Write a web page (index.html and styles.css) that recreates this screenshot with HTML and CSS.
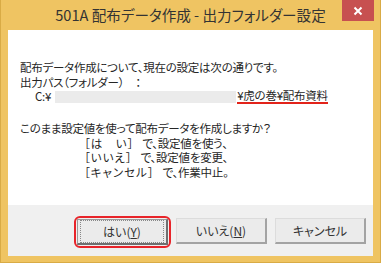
FILE: index.html
```html
<!DOCTYPE html>
<html lang="ja">

<head>
  <meta charset="UTF-8">
  <meta name="viewport" content="width=device-width, initial-scale=1.0">
  <title>501A 配布データ作成 - 出力フォルダー設定</title>
  <link rel="stylesheet" href="styles.css">
</head>

<body>
  <div class="window">
    <div class="titlebar">
      <span></span>
      <span class="title">501A 配布データ作成 - 出力フォルダー設定</span>
      <button class="close" aria-label="閉じる">
        <svg width="10" height="10" viewBox="0 0 10 10">
          <path d="M1.5 1.5 L8.5 8.5 M8.5 1.5 L1.5 8.5" stroke="#fff" stroke-width="2" />
        </svg>
      </button>
    </div>

    <div class="client">
      <div class="message">
        <p class="info">
          配布データ作成について、現在の設定は次の通りです。<br>
          出力パス（フォルダー）　：<br>
          <span class="path">C:¥<span class="masked"></span><span class="marked">¥虎の巻¥配布資料</span></span>
        </p>
        <p class="question">このまま設定値を使って配布データを作成しますか？</p>
        <ul class="choices">
          <li><span class="key">［は　い］</span>で、設定値を使う、</li>
          <li><span class="key">［いいえ］</span>で、設定値を変更、</li>
          <li><span class="key">［キャンセル］</span>で、作業中止。</li>
        </ul>
      </div>

      <div class="actions">
        <span class="highlight">
          <button class="btn default"><span class="focus">はい(<u>Y</u>)</span></button>
        </span>
        <button class="btn">いいえ(<u>N</u>)</button>
        <button class="btn">キャンセル</button>
      </div>
    </div>
  </div>
</body>

</html>
```

FILE: styles.css
```css
body {
  margin: 0;
  font-family: "Noto Sans CJK JP", sans-serif;
  font-feature-settings: "palt";
  background: #efc462;
}

.window {
  width: 381px;
  height: 263px;
  box-sizing: border-box;
  display: flex;
  flex-direction: column;
  background: #efc462;
  border: 1px solid #d9ab45;
  border-top: none;
}

.titlebar {
  height: 30px;
  display: grid;
  grid-template-columns: 1fr auto 1fr;
  align-items: start;
}

.title {
  padding-top: 5px;
  font-size: 14.6px;
  line-height: 20px;
  color: #333;
  white-space: nowrap;
}

.close {
  justify-self: end;
  width: 32px;
  height: 21px;
  margin-right: 6px;
  padding: 0;
  border: none;
  background: #c75050;
  display: flex;
  align-items: center;
  justify-content: center;
}

.client {
  flex: 1;
  margin: 0 7px 6px;
  display: flex;
  flex-direction: column;
}

.message {
  height: 175px;
  box-sizing: border-box;
  background: #fff;
  padding: 30px 0 0 12px;
  font-size: 11.5px;
  line-height: 14.5px;
  letter-spacing: -0.25px;
  color: #262626;
}

.message p {
  margin: 0;
}

.path {
  display: inline-flex;
  align-items: center;
  margin-left: 15px;
}

.masked {
  display: inline-block;
  width: 181px;
  height: 12px;
  margin: 0 1px 0 4px;
  background: #ebebeb;
}

.marked {
  border-bottom: 2px solid #e2231a;
  line-height: 13px;
}

.question {
  margin-top: 17px !important;
}

.choices {
  list-style: none;
  margin: 0;
  padding-left: 64px;
}

.key {
  letter-spacing: 1px;
  margin-right: 8px;
}

.actions {
  flex: 1;
  background: #f0f0f0;
  display: flex;
  justify-content: flex-end;
  align-items: flex-start;
  gap: 8px;
  padding: 13px 7px 0 0;
}

.highlight {
  display: flex;
  padding: 1px;
  margin: -2px -3px 0;
  border: 2px solid #e8242a;
  border-radius: 6px;
}

.btn {
  width: 91px;
  height: 26px;
  padding: 0;
  font-family: inherit;
  font-feature-settings: "palt";
  font-size: 12px;
  color: #333;
  background: #ebebeb;
  border: 1px solid #dcdcdc;
  border-right: 2px solid #a3a3a3;
  border-bottom: 2px solid #a3a3a3;
}

.btn u {
  text-underline-offset: 1px;
}

.btn.default {
  border-color: #9a9a9a;
  border-right-color: #6f6f6f;
  border-bottom-color: #6f6f6f;
}

.focus {
  display: flex;
  align-items: center;
  justify-content: center;
  height: 100%;
  margin: 0 2px;
  box-sizing: border-box;
  border: 1px dotted #888;
}
```
